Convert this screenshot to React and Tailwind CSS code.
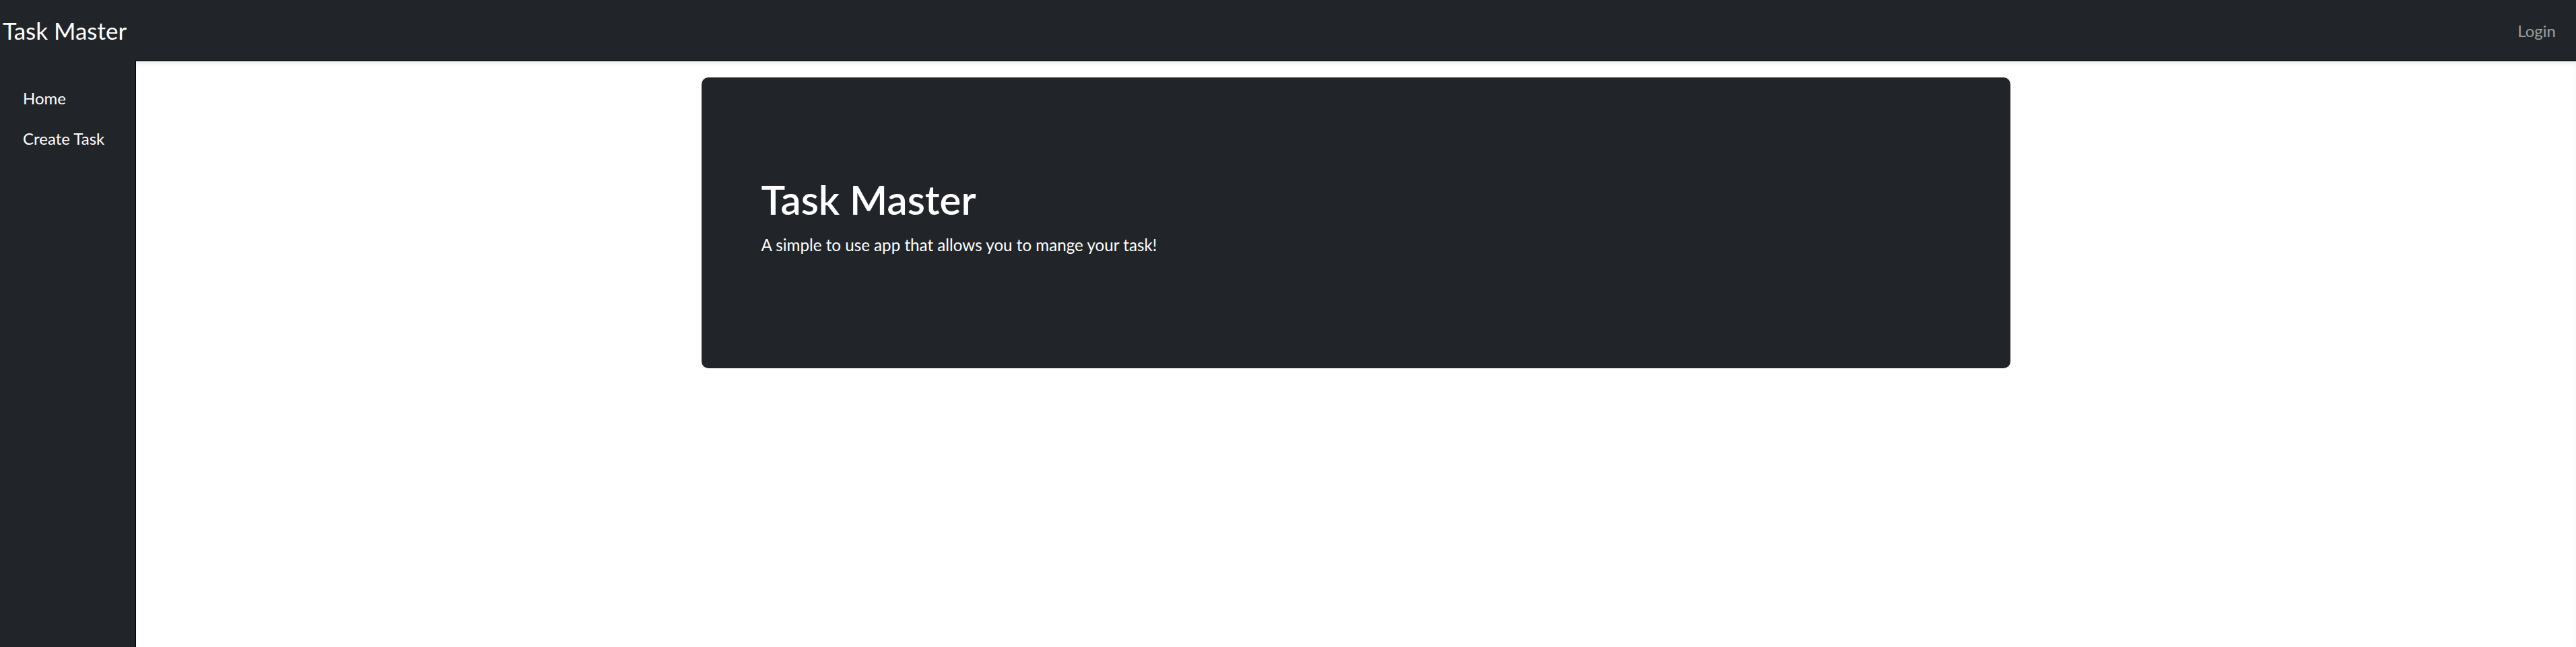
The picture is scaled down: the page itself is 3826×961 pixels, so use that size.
export default function App() {
  return (
    <div className="h-screen flex flex-col bg-white font-['Lato',sans-serif]">
      {/* Top navbar */}
      <nav className="h-[90px] shrink-0 bg-[#212529] flex items-center justify-between pl-[4px] pr-[30px]">
        <a href="#" className="text-[35px] leading-[52px] text-white">Task Master</a>
        <a href="#" className="mt-[2px] text-[24px] leading-[36px] text-white/55">Login</a>
      </nav>

      <div className="flex flex-1 min-h-0">
        {/* Sidebar */}
        <aside className="w-[201px] shrink-0 bg-[#212529] pt-[38px] pl-[34px] flex flex-col gap-[24px]">
          <a href="#" className="text-[24px] leading-[36px] text-white">Home</a>
          <a href="#" className="text-[24px] leading-[36px] text-white">Create Task</a>
        </aside>

        {/* Main */}
        <main className="flex-1 pt-[25px] shadow-[inset_1px_1px_0_#000,inset_0_6px_8px_-4px_rgba(0,0,0,0.12)]">
          <div className="w-[1944px] mx-auto h-[432px] bg-[#212529] rounded-[10px] pt-[145px] pl-[89px]">
            <h1 className="text-[60px] leading-[72px] font-semibold text-white">Task Master</h1>
            <p className="mt-[14px] text-[24.2px] leading-[36px] text-white">
              A simple to use app that allows you to mange your task!
            </p>
          </div>
        </main>
      </div>
    </div>
  );
}
